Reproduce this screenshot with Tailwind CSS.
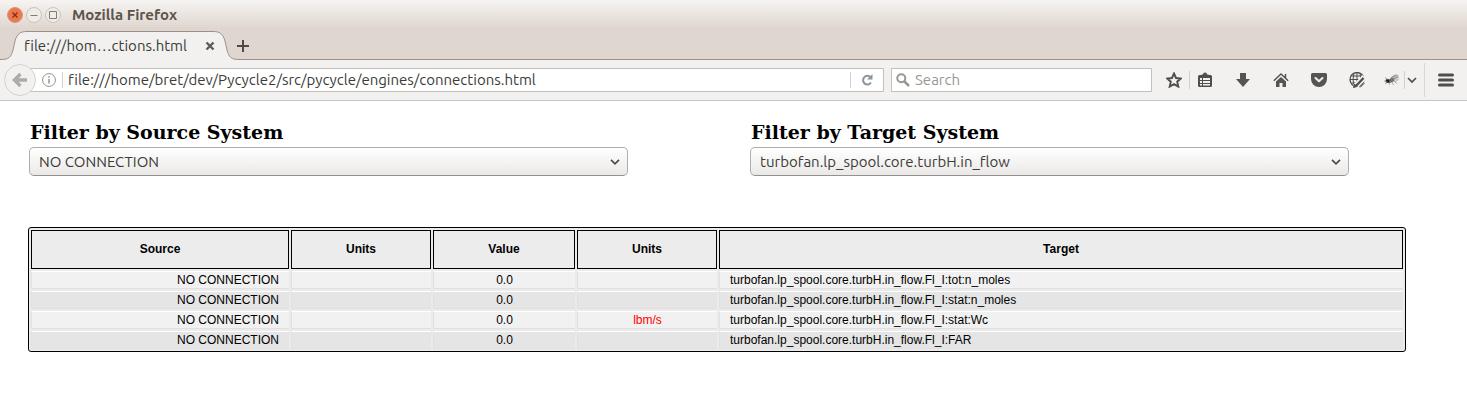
<!DOCTYPE html>
<html lang="en">
<head>
<meta charset="utf-8">
<title>Mozilla Firefox</title>
<script src="https://cdn.jsdelivr.net/npm/@tailwindcss/browser@4"></script>
</head>
<body class="bg-white text-black">
<header class="font-['Ubuntu','Noto_Sans',sans-serif] text-[15px] text-[#3c3b37] [font-variant-ligatures:none]">
  <div class="flex h-7 items-center gap-[3px] bg-linear-to-b from-[#f6f4f2] to-[#dfd6cf] pl-[7px] pt-px">
    <button aria-label="Close window" class="size-4"><svg viewBox="0 0 16 16" class="size-4"><circle cx="8" cy="8" r="7.5" fill="#f1764a" stroke="#cf9a85"/><path d="M5.5 5.5l5 5M10.5 5.5l-5 5" stroke="#6d3420" stroke-width="1.2"/></svg></button>
    <button aria-label="Minimize window" class="size-4"><svg viewBox="0 0 16 16" class="size-4"><circle cx="8" cy="8" r="7.5" fill="#efebe7" stroke="#c9c3bd"/><path d="M4.5 8.5h7" stroke="#827b74"/></svg></button>
    <button aria-label="Maximize window" class="size-4"><svg viewBox="0 0 16 16" class="size-4"><circle cx="8" cy="8" r="7.5" fill="#efebe7" stroke="#c9c3bd"/><path d="M4.500 4.500h7v7h-7z" fill="none" stroke="#827b74"/></svg></button>
    <span class="ml-2 text-[15px] font-bold leading-5 text-[#5b544c]">Mozilla Firefox</span>
  </div>
  <div class="relative flex h-8 items-center bg-[#dfd6cf]">
    <svg class="absolute inset-0 h-8 w-full" aria-hidden="true"><path d="M0 31.500H1C9 31.500 11 29 13 22L15 13C17 6 20 3.500 27 3.500H213C220 3.500 223 6 225 13L227 22C229 29 231 31.500 239 31.500V32H0z" fill="#f2f1f0"/><path d="M0 31.500H1C9 31.500 11 29 13 22L15 13C17 6 20 3.500 27 3.500H213C220 3.500 223 6 225 13L227 22C229 29 231 31.500 239 31.500H4000" fill="none" stroke="#9b918a"/></svg>
    <div class="relative flex items-center pl-6 pt-[3px]">
      <span class="w-[180px] whitespace-nowrap text-[15px] leading-5">file:///hom…ctions.html</span>
      <button aria-label="Close tab" class="flex w-3 justify-center"><svg viewBox="0 0 10 10" class="size-[10px]"><path d="M1.500 1.500l7 7M8.500 1.500l-7 7" stroke="#5c5b58" stroke-width="2.400"/></svg></button>
      <button aria-label="New tab" class="ml-5"><svg viewBox="0 0 14 14" class="size-[14px]"><path d="M7 1v12M1 7h12" stroke="#4c4b48" stroke-width="2"/></svg></button>
    </div>
  </div>
  <div class="flex h-[41px] items-center border-b border-[#c9c4be] bg-[#f2f1f0] pl-1">
    <button aria-label="Back" class="z-10 -mr-[6px] size-8 shrink-0"><svg viewBox="0 0 32 32" class="size-8"><circle cx="16" cy="16" r="15.500" fill="#f2f1f0" stroke="#d5d1cd"/><path d="M16.500 10l-6 6 6 6M11 16h12" fill="none" stroke="#acaba9" stroke-width="3.400"/></svg></button>
    <div class="flex h-6 min-w-0 flex-1 items-center border border-[#c3bfba] bg-white pl-[11px]">
      <svg viewBox="0 0 14 14" class="size-[14px] shrink-0"><circle cx="7" cy="7" r="6.400" fill="none" stroke="#929292"/><path d="M7 6v4.500M7 3.300v1.500" stroke="#929292" stroke-width="1.500"/></svg>
      <span class="ml-[6px] h-4 w-px bg-[#d2d0ce]"></span>
      <input aria-label="Address" value="file:///home/bret/dev/Pycycle2/src/pycycle/engines/connections.html" class="ml-[5px] min-w-0 flex-1 bg-transparent text-[15px] leading-5 outline-none [font-variant-ligatures:none]">
      <span class="h-4 w-px bg-[#d2d0ce]"></span>
      <button aria-label="Reload" class="flex w-8 justify-center"><svg viewBox="0 0 12 12" class="size-3"><path d="M9.500 3.200A4.300 4.300 0 1 0 10 8.500" fill="none" stroke="#8b959e" stroke-width="2"/><path d="M11.500 0v5.500H6z" fill="#8b959e"/></svg></button>
    </div>
    <label class="ml-[7px] flex h-6 w-[261px] items-center border border-[#c3bfba] bg-white pl-1">
      <svg viewBox="0 0 14 14" class="size-[14px] shrink-0"><circle cx="5.300" cy="5.300" r="4" fill="none" stroke="#999794" stroke-width="2"/><path d="M8 8l5 5" stroke="#999794" stroke-width="2.500"/></svg>
      <input aria-label="Search" placeholder="Search" class="ml-[5px] min-w-0 flex-1 bg-transparent text-[15px] leading-5 outline-none placeholder:text-[#999794]">
    </label>
    <div class="ml-[7px] flex h-full items-center">
      <button aria-label="Bookmark" class="flex w-[30px] justify-center"><svg viewBox="0 0 16 16" class="size-4"><path d="M8 1.500l2 4.500 4.800.5-3.600 3.200 1.100 4.900L8 12.100l-4.300 2.500 1.100-4.900L1.200 6.500 6 6z" fill="none" stroke="#4f4e4c" stroke-width="1.900"/></svg></button>
      <span class="h-[18px] w-px bg-[#d2cec9]"></span>
      <button aria-label="Bookmarks list" class="flex w-[30px] justify-center"><svg viewBox="0 0 16 16" class="size-4"><path d="M2.500 3.800h11a.8.8 0 0 1 .8.8v8.900a.8.8 0 0 1-.8.8h-11a.8.8 0 0 1-.8-.8V4.600a.8.8 0 0 1 .8-.8z" fill="#4f4e4c" stroke="#4f4e4c" stroke-width="1.400"/><path d="M4.500 5V2.500H6a2 2 0 0 1 4 0h1.500V5z" fill="#4f4e4c"/><path d="M3 6h2v2H3zM6 6h7v2H6zM3 9h2v2H3zM6 9h7v2H6zM3 12h2v1.500H3zM6 12h7v1.500H6z" fill="#f2f1f0"/></svg></button>
      <div class="ml-2 flex gap-2">
        <button aria-label="Downloads" class="flex w-[30px] justify-center"><svg viewBox="0 0 16 16" class="size-4"><path d="M5 1h6v6h4l-7 8-7-8h4z" fill="#555452"/></svg></button>
        <button aria-label="Home" class="flex w-[30px] justify-center"><svg viewBox="0 0 16 16" class="size-4"><path d="M.8 8.700L8 2l7.200 6.700M12.500 2v4" fill="none" stroke="#555452" stroke-width="1.500"/><path d="M3 9.500l5-4.600 5 4.600V15H9.500v-4h-3v4H3z" fill="#555452"/></svg></button>
        <button aria-label="Pocket" class="flex w-[30px] justify-center"><svg viewBox="0 0 16 16" class="size-4"><path d="M1.500 1h13A1.500 1.500 0 0 1 16 2.500V7a8 8 0 0 1-16 0V2.500A1.500 1.500 0 0 1 1.500 1z" fill="#555452"/><path d="M4.500 6L8 9.300 11.500 6" fill="none" stroke="#f2f1f0" stroke-width="2" stroke-linecap="round" stroke-linejoin="round"/></svg></button>
        <button aria-label="Web tools" class="flex w-[30px] justify-center"><svg viewBox="0 0 16 16" class="size-4"><g fill="none" stroke="#4f4e4c"><circle cx="8" cy="7.500" r="7" stroke-width="1.300"/><path d="M8 .5v14M1 7.500h14M2.500 4h11M2.500 11h11M5 1.500Q3 7.500 5 13.500M11 1.500Q13 7.500 11 13.500"/></g><path d="M6 15l9.500-10" stroke="#f2f1f0" stroke-width="5.500"/><path d="M7 14l7.500-8" stroke="#4f4e4c" stroke-width="2.400"/><path d="M4.500 15.500l1-3.500 2.500 2.500zM11 15.500l4.500-4.500" fill="#4f4e4c" stroke="#4f4e4c"/></svg></button>
        <button aria-label="Firebug" class="flex w-6 justify-center"><svg viewBox="0 0 16 16" class="size-4"><path d="M5 8Q8 2 14 2.500 16 5 8 9z" fill="#b4b2b0"/><path d="M7 8Q12 5 15.500 7 14 10 8 10z" fill="#cbc9c7"/><ellipse cx="7" cy="8.500" rx="3.500" ry="2" transform="rotate(-25 7 8.500)" fill="#73716f"/><circle cx="3.500" cy="9" r="2" fill="#1e1d1c"/><path d="M1 5.500l3 2M0 9l3 .5M1 12l2.500-2M6 10l-1 3M8 10l1.500 3M10 9l3 2.500M7 6l5-3M9 7l6-2" fill="none" stroke="#8a8886" stroke-width=".7"/></svg></button>
      </div>
      <span class="h-[18px] w-px bg-[#d2cec9]"></span>
      <button aria-label="More" class="flex w-[14px] justify-center"><svg viewBox="0 0 10 10" class="size-[10px]"><path d="M1 3l4 4 4-4" fill="none" stroke="#4f4e4c" stroke-width="1.700"/></svg></button>
      <span class="ml-[5px] h-[34px] w-px bg-[#dcd8d4]"></span>
      <button aria-label="Menu" class="flex w-[42px] justify-center"><svg viewBox="0 0 16 14" class="h-[14px] w-4"><path d="M1.500 2h13M1.500 7h13M1.500 12h13" stroke="#4f4e4c" stroke-width="3" stroke-linecap="round"/></svg></button>
    </div>
  </div>
</header>
<main>
  <section class="grid grid-cols-2 gap-x-[122px] pl-[29px] pr-[118px] pt-5">
    <div>
      <label for="src" class="mb-1 block pl-px font-['DejaVu_Serif',serif] text-[19px] font-bold leading-[22px]">Filter by Source System</label>
      <div class="relative">
        <select id="src" class="block h-[29px] w-full appearance-none rounded-[5px] border border-[#b0aeac] border-b-[#939190] bg-linear-to-b from-white to-[#eae9e7] px-[9px] font-['Ubuntu','Noto_Sans',sans-serif] text-[15px] leading-5 text-[#3c3b37] [font-variant-ligatures:none]"><option>NO CONNECTION</option></select>
        <svg viewBox="0 0 10 6" class="pointer-events-none absolute right-2 top-3 h-[6px] w-[10px]"><path d="M1 .8l4 4 4-4" fill="none" stroke="#4c4b48" stroke-width="1.700"/></svg>
      </div>
    </div>
    <div>
      <label for="tgt" class="mb-1 block pl-px font-['DejaVu_Serif',serif] text-[19px] font-bold leading-[22px]">Filter by Target System</label>
      <div class="relative">
        <select id="tgt" class="block h-[29px] w-full appearance-none rounded-[5px] border border-[#b0aeac] border-b-[#939190] bg-linear-to-b from-white to-[#eae9e7] px-[9px] font-['Ubuntu','Noto_Sans',sans-serif] text-[15px] leading-5 text-[#3c3b37] [font-variant-ligatures:none]"><option>turbofan.lp_spool.core.turbH.in_flow</option></select>
        <svg viewBox="0 0 10 6" class="pointer-events-none absolute right-2 top-3 h-[6px] w-[10px]"><path d="M1 .8l4 4 4-4" fill="none" stroke="#4c4b48" stroke-width="1.700"/></svg>
      </div>
    </div>
  </section>
  <section class="pl-7 pr-[61px] pt-[51px]">
    <table class="w-full table-fixed border-separate border-spacing-[2px] rounded-[3px] border border-black bg-[#ebebeb] font-['Liberation_Sans',Arial,sans-serif] text-[12px] leading-4 text-black">
      <colgroup><col class="w-[258px]"><col class="w-[140px]"><col class="w-[142px]"><col class="w-[140px]"><col></colgroup>
      <thead>
        <tr class="h-[39px] [&>th]:border [&>th]:border-black [&>th]:bg-[#ececec] [&>th]:px-0 [&>th]:pt-0 [&>th]:pb-[2px]"><th>Source</th><th>Units</th><th>Value</th><th>Units</th><th>Target</th></tr>
      </thead>
      <tbody class="[&_td]:h-[18px] [&_td]:border-t [&_td]:border-b [&_td]:border-l [&_td]:border-t-white [&_td]:border-b-[#e0e0e0] [&_td]:border-l-[#e0e0e0] [&_td]:px-[10px] [&_td]:py-0 [&>tr]:odd:bg-[#f1f1f1] [&>tr]:even:bg-[#e5e5e5]">
        <tr><td class="text-right">NO CONNECTION</td><td></td><td class="text-center">0.0</td><td></td><td>turbofan.lp_spool.core.turbH.in_flow.Fl_I:tot:n_moles</td></tr>
        <tr><td class="text-right">NO CONNECTION</td><td></td><td class="text-center">0.0</td><td></td><td>turbofan.lp_spool.core.turbH.in_flow.Fl_I:stat:n_moles</td></tr>
        <tr><td class="text-right">NO CONNECTION</td><td></td><td class="text-center">0.0</td><td class="text-center text-[#ff0000]">lbm/s</td><td>turbofan.lp_spool.core.turbH.in_flow.Fl_I:stat:Wc</td></tr>
        <tr><td class="text-right">NO CONNECTION</td><td></td><td class="text-center">0.0</td><td></td><td>turbofan.lp_spool.core.turbH.in_flow.Fl_I:FAR</td></tr>
      </tbody>
    </table>
  </section>
</main>
</body>
</html>
